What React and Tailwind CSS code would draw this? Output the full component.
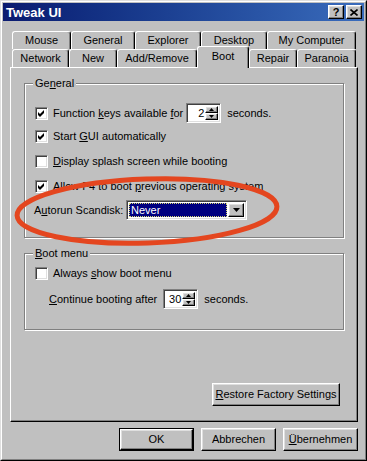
import React from 'react';

const raised =
  'border border-t-white border-l-white border-r-black border-b-black shadow-[inset_-1px_-1px_0_#808080,inset_1px_1px_0_#dfdfdf]';
const sunken =
  'border border-t-[#808080] border-l-[#808080] border-r-white border-b-white shadow-[inset_1px_1px_0_#404040,inset_-1px_-1px_0_#dfdfdf]';

const U = ({ children }) => <span className="underline underline-offset-[1px]">{children}</span>;

const Checkbox = ({ checked }) => (
  <div className={`w-[13px] h-[13px] bg-white shrink-0 flex items-center justify-center ${sunken}`}>
    {checked && (
      <svg width="9" height="9" viewBox="0 0 9 9">
        <polygon points="1,3 3,5 7,1 7,4 3,8 1,6" fill="#000" />
      </svg>
    )}
  </div>
);

const Tab = ({ className, children }) => (
  <div
    className={`h-[18px] flex items-center justify-center border-t border-l border-r border-t-white border-l-white border-r-black rounded-t-[3px] shadow-[inset_-1px_0_0_#808080] bg-[#c0c0c0] ${className}`}
  >
    {children}
  </div>
);

const Arrow = ({ up }) => (
  <svg width="5" height="3" viewBox="0 0 5 3">
    <polygon points={up ? '2.5,0 5,3 0,3' : '0,0 5,0 2.5,3'} fill="#000" />
  </svg>
);

const Spinner = ({ value, className }) => (
  <div className={`h-[20px] bg-white flex items-stretch p-[2px] ${sunken} ${className}`}>
    <div className="flex-1 text-right pr-[1px] leading-[15px]">{value}</div>
    <div className="w-[13px] flex flex-col">
      <div className={`flex-1 flex items-center justify-center bg-[#c0c0c0] ${raised}`}>
        <Arrow up />
      </div>
      <div className={`flex-1 flex items-center justify-center bg-[#c0c0c0] ${raised}`}>
        <Arrow />
      </div>
    </div>
  </div>
);

const Button = ({ className, children }) => (
  <div className={`h-[23px] flex items-center justify-center bg-[#c0c0c0] ${raised} ${className}`}>
    {children}
  </div>
);

const Group = ({ label, className, children }) => (
  <div className={`relative w-[320px] border border-[#808080] shadow-[inset_1px_1px_0_#fff,1px_1px_0_#fff] ${className}`}>
    <div className="absolute -top-[7px] left-[8px] px-[2px] bg-[#c0c0c0] leading-[13px]">{label}</div>
    {children}
  </div>
);

export default function App() {
  return (
    <div className="relative w-[367px] h-[461px] bg-[#c0c0c0] text-[11px] text-black font-['Liberation_Sans',Arial,sans-serif] border border-t-[#dfdfdf] border-l-[#dfdfdf] border-r-black border-b-black">
      <div className="h-full p-[1px] border border-t-white border-l-white border-r-[#808080] border-b-[#808080]">
        {/* title bar */}
        <div className="h-[18px] flex items-center justify-between pl-[3px] pr-[2px] bg-linear-to-r from-[#0a1a70] to-[#3a6cbc]">
          <span className="text-white font-bold text-[13px] leading-none">Tweak UI</span>
          <div className="flex gap-[2px]">
            <div className={`w-[16px] h-[14px] flex items-center justify-center bg-[#c0c0c0] font-bold text-[11px] leading-none ${raised}`}>
              ?
            </div>
            <div className={`w-[16px] h-[14px] flex items-center justify-center bg-[#c0c0c0] ${raised}`}>
              <svg width="8" height="7" viewBox="0 0 8 7">
                <path d="M0.5 0.5 L7.5 6.5 M7.5 0.5 L0.5 6.5" stroke="#000" strokeWidth="1.6" />
              </svg>
            </div>
          </div>
        </div>

        {/* tabs */}
        <div className="mt-[10px] ml-[9px] flex">
          <Tab className="w-[59px]">Mouse</Tab>
          <Tab className="w-[64px]">General</Tab>
          <Tab className="w-[66px]">Explorer</Tab>
          <Tab className="w-[66px]">Desktop</Tab>
          <Tab className="w-[89px]">My Computer</Tab>
        </div>
        <div className="ml-[9px] flex items-end h-[18px]">
          <Tab className="w-[57px]">Network</Tab>
          <Tab className="w-[48px]">New</Tab>
          <Tab className="w-[80px]">Add/Remove</Tab>
          <Tab className="w-[52px] !h-[22px] -mb-[1px] relative z-10 pb-[3px]">Boot</Tab>
          <Tab className="w-[48px]">Repair</Tab>
          <Tab className="w-[59px]">Paranoia</Tab>
        </div>

        {/* panel */}
        <div className="ml-[7px] w-[348px] h-[355px] flex flex-col border border-t-white border-l-white border-r-black border-b-black shadow-[inset_-1px_-1px_0_#808080]">
          <Group label={<>Ge<U>n</U>eral</>} className="mt-[15px] ml-[13px] pt-[19px] pb-[17px] pl-[10px]">
            <div className="h-[20px] flex items-center">
              <Checkbox checked />
              <span className="ml-[5px]">
                Function <U>k</U>eys available <U>f</U>or
              </span>
              <Spinner value="2" className="ml-[3px] w-[35px]" />
              <span className="ml-[6px]">seconds.</span>
            </div>
            <div className="h-[20px] mt-[3px] flex items-center">
              <Checkbox checked />
              <span className="ml-[5px]">
                Start <U>G</U>UI automatically
              </span>
            </div>
            <div className="h-[20px] mt-[5px] flex items-center">
              <Checkbox />
              <span className="ml-[5px]">
                <U>D</U>isplay splash screen while booting
              </span>
            </div>
            <div className="h-[20px] mt-[5px] flex items-center">
              <Checkbox checked />
              <span className="ml-[5px]">
                Allow F4 to boot <U>p</U>revious operating system
              </span>
            </div>
            <div className="h-[20px] mt-[4px] flex items-center">
              <span className="w-[92px] -ml-[1px]">
                A<U>u</U>torun Scandisk:
              </span>
              <div className={`w-[121px] h-[20px] bg-white flex items-stretch p-[2px] ${sunken}`}>
                <div className="flex-1 bg-[#000080] text-white leading-[14px] pl-[2px] outline-1 outline-dotted outline-[#d8d870] -outline-offset-1 mr-[1px]">
                  Never
                </div>
                <div className={`w-[16px] flex items-center justify-center bg-[#c0c0c0] ${raised}`}>
                  <svg width="7" height="4" viewBox="0 0 7 4">
                    <polygon points="0,0 7,0 3.5,4" fill="#000" />
                  </svg>
                </div>
              </div>
            </div>
          </Group>

          <Group label={<><U>B</U>oot menu</>} className="mt-[15px] ml-[13px] pt-[9px] pb-[20px] pl-[10px]">
            <div className="h-[20px] flex items-center">
              <Checkbox />
              <span className="ml-[5px]">
                Always <U>s</U>how boot menu
              </span>
            </div>
            <div className="h-[20px] mt-[6px] ml-[14px] flex items-center">
              <span>
                <U>C</U>ontinue booting after
              </span>
              <Spinner value="30" className="ml-[6px] w-[35px]" />
              <span className="ml-[6px]">seconds.</span>
            </div>
          </Group>

          <Button className="mt-auto mb-[15px] self-end mr-[17px] w-[128px]">
            <span>
              <U>R</U>estore Factory Settings
            </span>
          </Button>
        </div>

        {/* dialog buttons */}
        <div className="mt-[6px] pr-[6px] flex justify-end gap-[7px]">
          <div className="border border-black">
            <Button className="w-[73px] !h-[21px]">OK</Button>
          </div>
          <Button className="w-[75px]">Abbrechen</Button>
          <Button className="w-[75px]">
            <span>
              <U>Ü</U>bernehmen
            </span>
          </Button>
        </div>
      </div>

      {/* red hand-drawn marker */}
      <svg className="absolute inset-0 pointer-events-none" width="367" height="461" viewBox="0 0 367 461">
        <ellipse
          cx="146"
          cy="210"
          rx="130"
          ry="32"
          transform="rotate(-2 146 210)"
          fill="none"
          stroke="#e4461f"
          strokeWidth="5"
        />
      </svg>
    </div>
  );
}
